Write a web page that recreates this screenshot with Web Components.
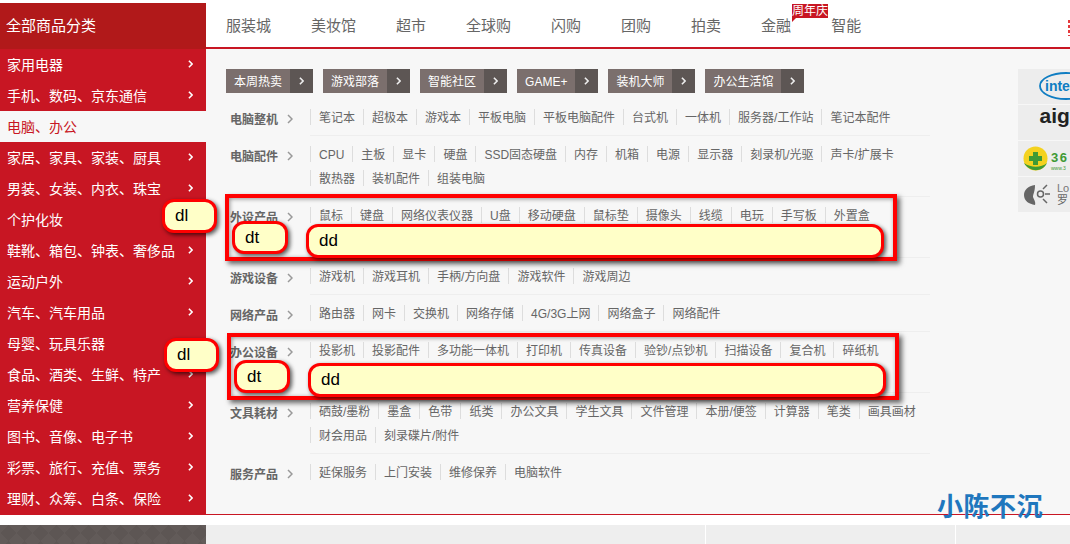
<!DOCTYPE html>
<html lang="zh">
<head>
<meta charset="utf-8">
<title>全部商品分类</title>
<style>
  html, body { margin: 0; background: #fff; }
  body { font-family: "Liberation Sans", "Noto Sans CJK SC", sans-serif; width: 1070px; height: 544px; overflow: hidden; }
</style>
</head>
<body>
<jd-page>
  <cat-sidebar slot="side" title="全部商品分类">
    <cat-item>家用电器</cat-item>
    <cat-item>手机、数码、京东通信</cat-item>
    <cat-item active>电脑、办公</cat-item>
    <cat-item>家居、家具、家装、厨具</cat-item>
    <cat-item>男装、女装、内衣、珠宝</cat-item>
    <cat-item>个护化妆</cat-item>
    <cat-item>鞋靴、箱包、钟表、奢侈品</cat-item>
    <cat-item>运动户外</cat-item>
    <cat-item>汽车、汽车用品</cat-item>
    <cat-item>母婴、玩具乐器</cat-item>
    <cat-item>食品、酒类、生鲜、特产</cat-item>
    <cat-item>营养保健</cat-item>
    <cat-item>图书、音像、电子书</cat-item>
    <cat-item>彩票、旅行、充值、票务</cat-item>
    <cat-item>理财、众筹、白条、保险</cat-item>
  </cat-sidebar>

  <top-nav slot="nav">
    <nav-link>服装城</nav-link>
    <nav-link>美妆馆</nav-link>
    <nav-link>超市</nav-link>
    <nav-link>全球购</nav-link>
    <nav-link>闪购</nav-link>
    <nav-link>团购</nav-link>
    <nav-link>拍卖</nav-link>
    <nav-link badge="周年庆">金融</nav-link>
    <nav-link>智能</nav-link>
  </top-nav>

  <tag-bar slot="tags">
    <hot-tag>本周热卖</hot-tag>
    <hot-tag>游戏部落</hot-tag>
    <hot-tag>智能社区</hot-tag>
    <hot-tag>GAME+</hot-tag>
    <hot-tag>装机大师</hot-tag>
    <hot-tag>办公生活馆</hot-tag>
  </tag-bar>

  <sort-row slot="rows" label="电脑整机">
    <sort-link>笔记本</sort-link><sort-link>超极本</sort-link><sort-link>游戏本</sort-link><sort-link>平板电脑</sort-link><sort-link>平板电脑配件</sort-link><sort-link>台式机</sort-link><sort-link>一体机</sort-link><sort-link>服务器/工作站</sort-link><sort-link>笔记本配件</sort-link>
  </sort-row>
  <sort-row slot="rows" label="电脑配件">
    <sort-link>CPU</sort-link><sort-link>主板</sort-link><sort-link>显卡</sort-link><sort-link>硬盘</sort-link><sort-link>SSD固态硬盘</sort-link><sort-link>内存</sort-link><sort-link>机箱</sort-link><sort-link>电源</sort-link><sort-link>显示器</sort-link><sort-link>刻录机/光驱</sort-link><sort-link>声卡/扩展卡</sort-link><sort-link>散热器</sort-link><sort-link>装机配件</sort-link><sort-link>组装电脑</sort-link>
  </sort-row>
  <sort-row slot="rows" label="外设产品" tall>
    <sort-link>鼠标</sort-link><sort-link>键盘</sort-link><sort-link>网络仪表仪器</sort-link><sort-link>U盘</sort-link><sort-link>移动硬盘</sort-link><sort-link>鼠标垫</sort-link><sort-link>摄像头</sort-link><sort-link>线缆</sort-link><sort-link>电玩</sort-link><sort-link>手写板</sort-link><sort-link>外置盒</sort-link>
  </sort-row>
  <sort-row slot="rows" label="游戏设备">
    <sort-link>游戏机</sort-link><sort-link>游戏耳机</sort-link><sort-link>手柄/方向盘</sort-link><sort-link>游戏软件</sort-link><sort-link>游戏周边</sort-link>
  </sort-row>
  <sort-row slot="rows" label="网络产品">
    <sort-link>路由器</sort-link><sort-link>网卡</sort-link><sort-link>交换机</sort-link><sort-link>网络存储</sort-link><sort-link>4G/3G上网</sort-link><sort-link>网络盒子</sort-link><sort-link>网络配件</sort-link>
  </sort-row>
  <sort-row slot="rows" label="办公设备" tall>
    <sort-link>投影机</sort-link><sort-link>投影配件</sort-link><sort-link>多功能一体机</sort-link><sort-link>打印机</sort-link><sort-link>传真设备</sort-link><sort-link>验钞/点钞机</sort-link><sort-link>扫描设备</sort-link><sort-link>复合机</sort-link><sort-link>碎纸机</sort-link>
  </sort-row>
  <sort-row slot="rows" label="文具耗材">
    <sort-link>硒鼓/墨粉</sort-link><sort-link>墨盒</sort-link><sort-link>色带</sort-link><sort-link>纸类</sort-link><sort-link>办公文具</sort-link><sort-link>学生文具</sort-link><sort-link>文件管理</sort-link><sort-link>本册/便签</sort-link><sort-link>计算器</sort-link><sort-link>笔类</sort-link><sort-link>画具画材</sort-link><sort-link>财会用品</sort-link><sort-link>刻录碟片/附件</sort-link>
  </sort-row>
  <sort-row slot="rows" label="服务产品" last>
    <sort-link>延保服务</sort-link><sort-link>上门安装</sort-link><sort-link>维修保养</sort-link><sort-link>电脑软件</sort-link>
  </sort-row>

  <brand-strip slot="brands"></brand-strip>

  <bottom-strip slot="bottom"></bottom-strip>

  <note-box slot="notes" style="left:225px;top:194px;width:672px;height:67px"></note-box>
  <note-box slot="notes" style="left:227px;top:333px;width:672px;height:67px"></note-box>
  <note-bubble slot="notes" style="left:162px;top:199px;width:55px;height:34px">dl</note-bubble>
  <note-bubble slot="notes" style="left:232px;top:221px;width:56px;height:33px">dt</note-bubble>
  <note-bubble slot="notes" style="left:306px;top:224px;width:578px;height:34px">dd</note-bubble>
  <note-bubble slot="notes" style="left:164px;top:338px;width:55px;height:34px">dl</note-bubble>
  <note-bubble slot="notes" style="left:234px;top:360px;width:56px;height:33px">dt</note-bubble>
  <note-bubble slot="notes" style="left:308px;top:363px;width:578px;height:34px">dd</note-bubble>
  <water-mark slot="notes" style="left:937px;top:487px">小陈不沉</water-mark>
</jd-page>

<script>
const chevron = (color, w = 5, h = 8, sw = 2) =>
  `<svg width="${w}" height="${h}" viewBox="0 0 6 10" fill="none"><path d="M1 1l4 4-4 4" stroke="${color}" stroke-width="${sw}"/></svg>`;

function define(name, html) {
  customElements.define(name, class extends HTMLElement {
    constructor() {
      super();
      this.attachShadow({ mode: 'open' }).innerHTML = html;
    }
  });
}

define('jd-page', `
  <style>
    :host { display: block; position: relative; width: 1070px; height: 544px; overflow: hidden; padding-top: 3px; box-sizing: border-box; }
    .top { display: flex; height: 512px; }
    .side { flex: 0 0 206px; }
    .main { flex: 1; min-width: 0; display: flex; flex-direction: column; }
    .panel { flex: 1; display: flex; background: #f7f7f7; border-bottom: 1px solid #c81623; padding: 20px 0 0 20px; }
    .left { flex: 0 0 704px; }
    .right { margin-left: 88px; }
    .rows { margin-top: 6px; }
    .bottom { margin-top: 10px; }
  </style>
  <div class="top">
    <div class="side"><slot name="side"></slot></div>
    <div class="main">
      <slot name="nav"></slot>
      <div class="panel">
        <div class="left">
          <slot name="tags"></slot>
          <div class="rows"><slot name="rows"></slot></div>
        </div>
        <div class="right"><slot name="brands"></slot></div>
      </div>
    </div>
  </div>
  <div class="bottom"><slot name="bottom"></slot></div>
  <slot name="notes"></slot>
`);

customElements.define('cat-sidebar', class extends HTMLElement {
  constructor() {
    super();
    this.attachShadow({ mode: 'open' }).innerHTML = `
      <style>
        :host { display: block; background: #c81623; height: 512px; }
        h2 { margin: 0; height: 46px; line-height: 46px; padding-left: 6px; background: #b1191a; color: #fff; font-size: 15px; font-weight: 400; }
      </style>
      <h2>${this.getAttribute('title')}</h2>
      <slot></slot>
    `;
  }
});

define('cat-item', `
  <style>
    :host { display: flex; align-items: center; justify-content: space-between; box-sizing: border-box; height: 31px; padding: 0 13px 2px 7px; color: #fff; font-size: 14px; }
    :host([active]) { background: #f7f7f7; color: #c81623; }
    :host([active]) svg { display: none; }
  </style>
  <slot></slot>${chevron('#fff')}
`);

define('top-nav', `
  <style>
    :host { display: flex; gap: 40px; align-items: center; height: 44px; padding-left: 20px; border-bottom: 2px solid #c81623; background: #fff; position: relative; }
    i { position: absolute; right: 0; top: 17px; width: 2px; height: 16px; background: repeating-linear-gradient(#e4393c 0 3px, #fff 3px 5px); }
  </style>
  <slot></slot><i></i>
`);

customElements.define('nav-link', class extends HTMLElement {
  constructor() {
    super();
    const badge = this.getAttribute('badge');
    this.attachShadow({ mode: 'open' }).innerHTML = `
      <style>
        :host { display: block; position: relative; color: #666; font-size: 15px; line-height: 20px; top: 1px; }
        b { position: absolute; left: 31px; top: -12px; background: #c81623; color: #fff; font-size: 12px; font-weight: 400; line-height: 14px; width: 36px; text-align: center; white-space: nowrap; }
        b::after { content: ""; position: absolute; left: 0; top: 14px; border-top: 4px solid #c81623; border-right: 4px solid transparent; }
      </style>
      <slot></slot>${badge ? `<b>${badge}</b>` : ''}
    `;
  }
});

define('tag-bar', `
  <style>:host { display: flex; gap: 10px; height: 24px; }</style>
  <slot></slot>
`);

define('hot-tag', `
  <style>
    :host { display: flex; height: 24px; background: #7b6f6d; color: #fff; font-size: 12px; line-height: 26px; }
    span { padding: 0 8px; }
    em { width: 23px; background: #5d5654; display: flex; align-items: center; justify-content: center; }
  </style>
  <span><slot></slot></span><em>${chevron('#eee', 5, 8, 2)}</em>
`);

customElements.define('sort-row', class extends HTMLElement {
  constructor() {
    super();
    this.attachShadow({ mode: 'open' }).innerHTML = `
      <style>
        :host { display: flex; }
        dt { flex: 0 0 80px; padding: 12px 0 0 4px; font-size: 12px; font-weight: 700; line-height: 18px; color: #666; display: flex; gap: 9px; align-items: flex-start; width: 80px; }
        dt svg { margin-top: 3px; }
        dd { margin: 0; flex: 1; display: flex; flex-wrap: wrap; align-content: flex-start; gap: 8px 0; padding: 10px 0; border-bottom: 1px solid #eee; min-height: 16px; }
        :host([tall]) dd { min-height: 40px; }
        :host([last]) dd { border-bottom: 0; }
      </style>
      <dt>${this.getAttribute('label')}${chevron('#999', 6, 10, 1.5)}</dt>
      <dd><slot></slot></dd>
    `;
  }
});

define('sort-link', `
  <style>
    :host { display: block; height: 16px; line-height: 18px; padding: 0 8px; border-left: 1px solid #ddd; color: #666; font-size: 12px; white-space: nowrap; }
  </style>
  <slot></slot>
`);

define('brand-strip', `
  <style>
    :host { display: flex; flex-direction: column; gap: 1px; width: 52px; }
    svg { display: block; background: #ededed; }
    text { font-family: "Liberation Sans", "Noto Sans CJK SC", sans-serif; }
  </style>
  <svg width="52" height="35" viewBox="0 0 52 35">
    <ellipse cx="48" cy="17" rx="26" ry="13" fill="none" stroke="#0f7dc2" stroke-width="1.800"/>
    <text x="27" y="22" font-size="14" font-weight="700" fill="#0f7dc2">inte</text>
  </svg>
  <svg width="52" height="35" viewBox="0 0 52 35">
    <text x="21.500" y="18" font-size="21" font-weight="700" fill="#222">aig</text>
  </svg>
  <svg width="52" height="35" viewBox="0 0 52 35">
    <circle cx="17.500" cy="17.500" r="12" fill="#f4d21f"/>
    <path d="M6 22c5 9 18 10 23 0-6 5-16 5-23 0z" fill="#3f9a35"/>
    <path d="M15 11h5v4h4v5h-4v4h-5v-4h-4v-5h4z" fill="#3f9a35"/>
    <text x="33" y="21" font-size="13" font-weight="700" letter-spacing="1.500" fill="#3f9a35">36</text>
    <text x="33" y="28.500" font-size="5" fill="#3f9a35">www.3</text>
  </svg>
  <svg width="52" height="35" viewBox="0 0 52 35">
    <path d="M17 8c-7 1-11 5-11 10 0 6 5 9 11 10 1-3-1-5-2-8 0-3 2-5 2-12z" fill="#666"/>
    <circle cx="22.500" cy="17" r="3" fill="none" stroke="#666" stroke-width="1.500"/>
    <path d="M25 12l4-4M27 17h5M25 22l4 4" stroke="#666" stroke-width="1.500"/>
    <text x="39" y="15" font-size="11" fill="#777">Lo</text>
    <text x="39" y="27" font-size="11" fill="#666">罗</text>
  </svg>
`);

define('bottom-strip', `
  <style>
    :host { display: flex; height: 19px; background: #fff; }
    .a { flex: 0 0 206px; background: #5d5654; background-image: linear-gradient(135deg, #625b59 25%, transparent 25%, transparent 75%, #625b59 75%), linear-gradient(45deg, #625b59 25%, transparent 25%, transparent 75%, #625b59 75%); background-size: 16px 16px; }
    .b { flex: 0 0 499px; background: #eee; }
    .c { flex: 0 0 249px; background: #eee; margin-left: 1px; }
    .d { flex: 1; background: #eee; margin-left: 1px; }
  </style>
  <div class="a"></div><div class="b"></div><div class="c"></div><div class="d"></div>
`);

define('note-box', `
  <style>
    :host { display: block; position: absolute; box-sizing: border-box; border: 4px solid #f00; box-shadow: 3px 3px 5px rgba(0,0,0,.6), inset 1px 1px 4px rgba(0,0,0,.4); }
  </style>
`);

define('note-bubble', `
  <style>
    :host { display: flex; align-items: center; position: absolute; box-sizing: border-box; padding-left: 10px; border: 3px solid #f00; border-radius: 12px; background: #ffffc8; box-shadow: 2px 2px 4px rgba(0,0,0,.65); color: #000; font-size: 17px; }
  </style>
  <slot></slot>
`);

define('water-mark', `
  <style>
    :host { display: block; position: absolute; color: #1f77be; font-size: 26px; font-weight: 700; letter-spacing: .5px; line-height: 36px; white-space: nowrap; font-family: "Noto Sans CJK SC", sans-serif; }
  </style>
  <slot></slot>
`);
</script>
</body>
</html>
